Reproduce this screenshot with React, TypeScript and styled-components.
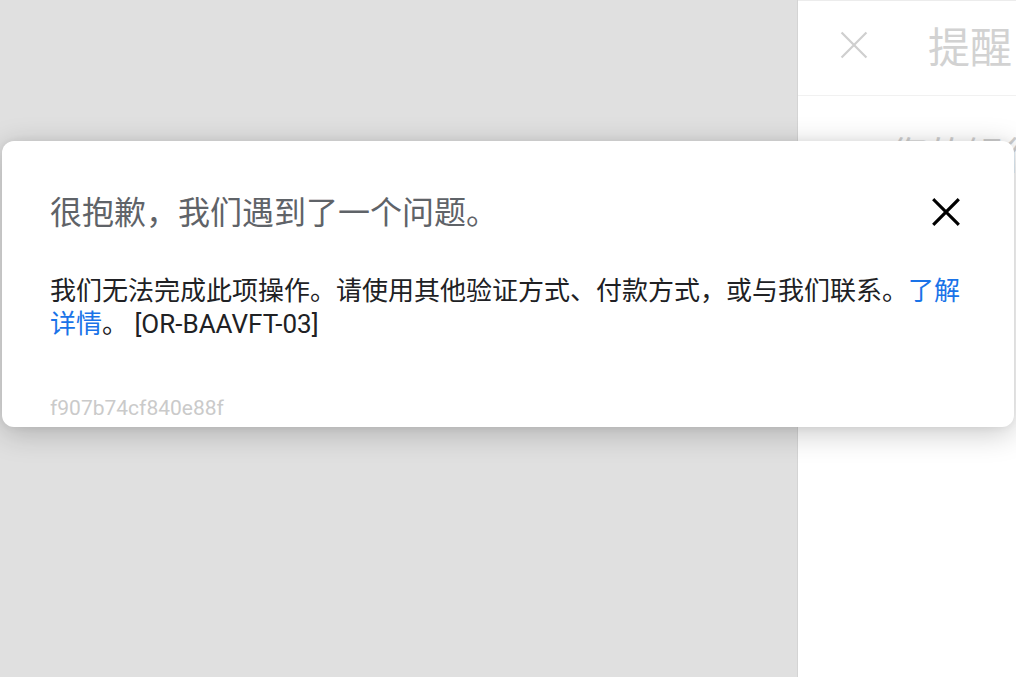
import React from "react";
import styled, { createGlobalStyle } from "styled-components";

const Global = createGlobalStyle`
  html, body { margin: 0; padding: 0; }
  body {
    font-family: Roboto, "Noto Sans CJK SC", sans-serif;
    background: #ffffff;
  }
  #root { height: 677px; }
`;

const Page = styled.div`
  position: relative;
  display: flex;
  width: 1016px;
  height: 677px;
  overflow: hidden;
`;

const Scrim = styled.div`
  width: 797px;
  flex: none;
  background: #e0e0e0;
  border-right: 1px solid #d4d4d4;
`;

const SidePanel = styled.aside`
  flex: 1;
  display: flex;
  flex-direction: column;
  background: #ffffff;
  border-top: 1px solid #ececec;
`;

const PanelHeader = styled.header`
  height: 95px;
  flex: none;
  box-sizing: border-box;
  display: flex;
  align-items: center;
  gap: 60px;
  padding: 0 0 6px 42px;
  border-bottom: 1px solid #f1f1f1;
  white-space: nowrap;
`;

const PanelTitle = styled.h2`
  margin: 0;
  font-family: "Noto Sans CJK SC", sans-serif;
  font-weight: 400;
  font-size: 42px;
  line-height: 50px;
  color: #d2d2d2;
`;

const PanelRow = styled.div`
  display: flex;
  align-items: center;
  gap: 20px;
  padding: 34px 0 0 56px;
  white-space: nowrap;
`;

const RowIcon = styled.span`
  width: 16px;
  height: 16px;
  border-radius: 50%;
  background: #f2b8b5;
  flex: none;
`;

const RowText = styled.span`
  font-family: "Noto Sans CJK SC", sans-serif;
  font-size: 38px;
  line-height: 46px;
  color: #cfcfcf;
`;

const Dialog = styled.section`
  position: absolute;
  left: 2px;
  top: 141px;
  width: 1012px;
  height: 286px;
  box-sizing: border-box;
  padding: 47px 48px 0 48px;
  background: #ffffff;
  border-radius: 12px;
  box-shadow: 0 6px 30px rgba(0, 0, 0, 0.22), 0 0 8px rgba(0, 0, 0, 0.06);
  display: flex;
  flex-direction: column;
`;

const TitleRow = styled.div`
  display: flex;
  align-items: center;
  justify-content: space-between;
`;

const Title = styled.h1`
  margin: 0;
  font-family: "Noto Sans CJK SC", sans-serif;
  font-weight: 400;
  font-size: 32px;
  line-height: 40px;
  color: #5f6368;
`;

const CloseButton = styled.button`
  width: 41px;
  height: 40px;
  margin-top: 4px;
  padding: 0;
  border: 0;
  background: transparent;
  display: flex;
  align-items: center;
  justify-content: center;
  cursor: pointer;
`;

const Message = styled.p`
  margin: 43px 0 0 0;
  font-size: 26px;
  line-height: 33px;
  color: #202124;
`;

const Link = styled.a`
  color: #1a73e8;
  text-decoration: none;
`;

const Hash = styled.div`
  margin-top: 55px;
  font-size: 21px;
  line-height: 24px;
  color: #cacaca;
`;

const CrossIcon: React.FC<{ size: number; stroke: number; color: string }> = ({ size, stroke, color }) => (
  <svg width={size} height={size} viewBox="0 0 24 24" fill="none">
    <path d="M2 2 L22 22 M22 2 L2 22" stroke={color} strokeWidth={stroke} strokeLinecap="square" />
  </svg>
);

export default function App() {
  return (
    <>
      <Global />
      <Page>
        <Scrim />
        <SidePanel>
          <PanelHeader>
            <CrossIcon size={28} stroke={1.9} color="#cfcfcf" />
            <PanelTitle>提醒</PanelTitle>
          </PanelHeader>
          <PanelRow>
            <RowIcon />
            <RowText>您的银行卡已被拒绝</RowText>
          </PanelRow>
        </SidePanel>
        <Dialog role="dialog">
          <TitleRow>
            <Title>很抱歉，我们遇到了一个问题。</Title>
            <CloseButton aria-label="关闭">
              <CrossIcon size={28} stroke={2.7} color="#000000" />
            </CloseButton>
          </TitleRow>
          <Message>
            我们无法完成此项操作。请使用其他验证方式、付款方式，或与我们联系。<Link href="#">了解详情</Link>。 [OR-BAAVFT-03]
          </Message>
          <Hash>f907b74cf840e88f</Hash>
        </Dialog>
      </Page>
    </>
  );
}
